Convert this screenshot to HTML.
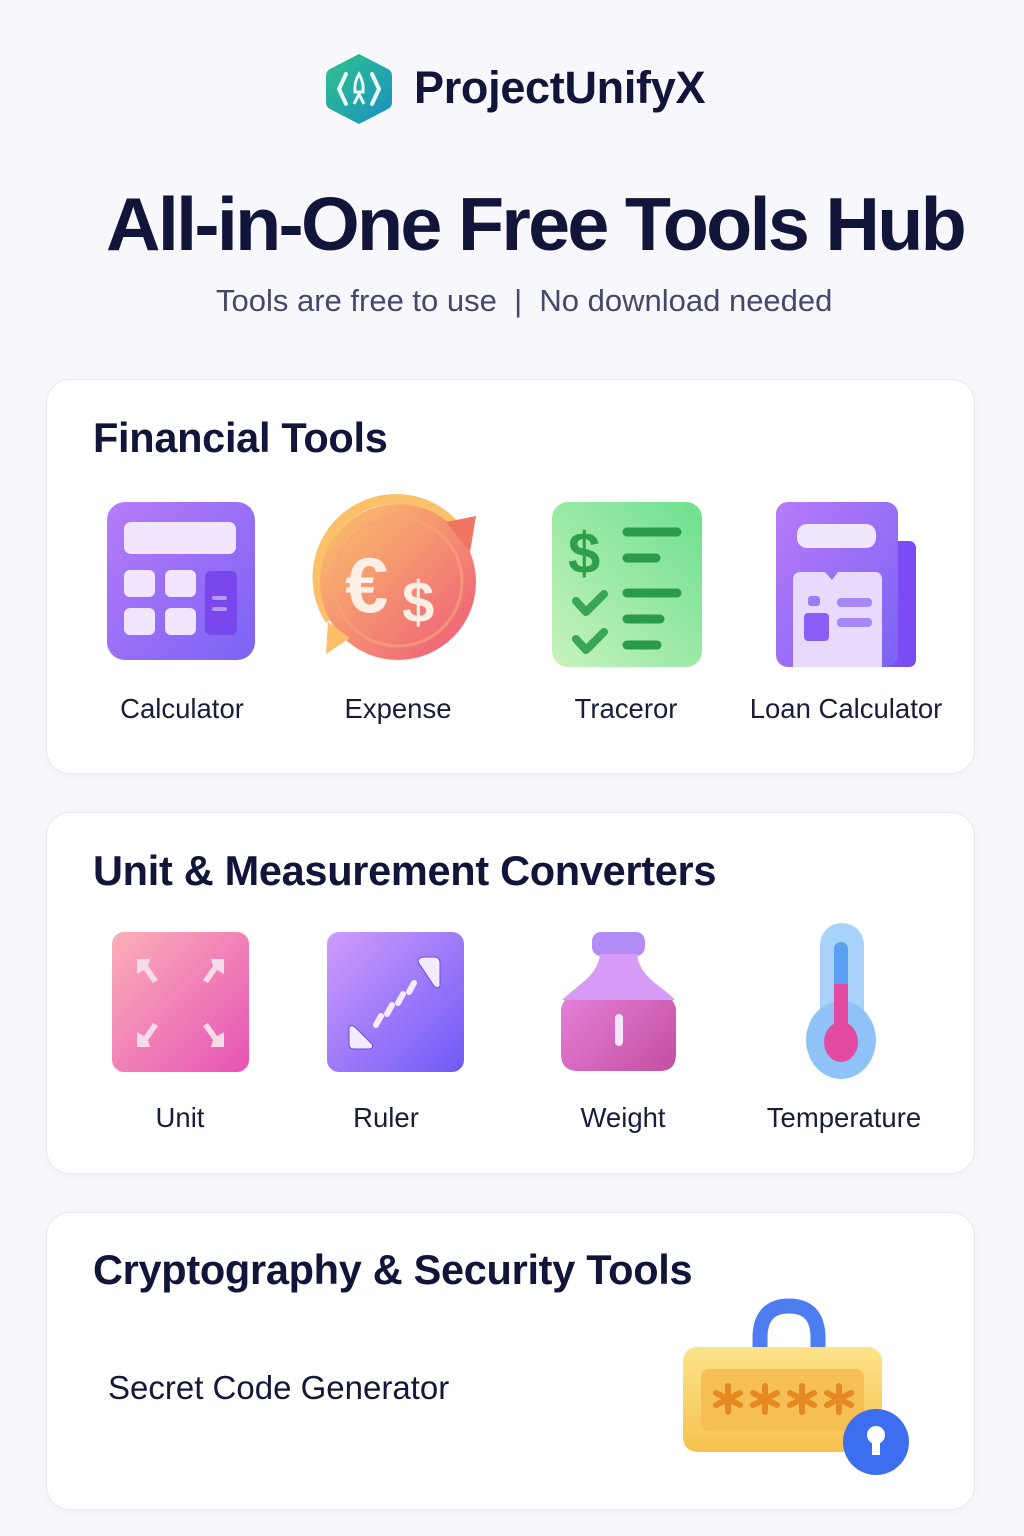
<!DOCTYPE html>
<html><head><meta charset="utf-8"><style>
*{margin:0;padding:0;box-sizing:border-box}
body{width:1024px;height:1536px;background:#f8f8fc;font-family:"Liberation Sans",sans-serif;color:#12153a;position:relative;overflow:hidden}
.a{position:absolute}
.card{position:absolute;left:46px;width:929px;background:#fff;border:1.5px solid #e7e7ef;border-radius:24px;box-shadow:0 2px 8px rgba(40,40,90,.04)}
.h{position:absolute;left:93px;font-size:41.5px;font-weight:bold;letter-spacing:-.3px;color:#12153a;white-space:nowrap}
.lbl{position:absolute;font-size:27.5px;color:#1a1d3a;text-align:center;width:240px}
</style></head><body>
<svg class="a" style="left:324px;top:52px" width="70" height="74" viewBox="0 0 70 74">
<defs><linearGradient id="lg" x1="0" y1="0" x2="1" y2="1"><stop offset="0" stop-color="#2fc48a"/><stop offset="1" stop-color="#1a8fc4"/></linearGradient></defs>
<path d="M35 2 L64 17 Q68 19 68 24 L68 50 Q68 55 64 57 L35 72 L6 57 Q2 55 2 50 L2 24 Q2 19 6 17 Z" fill="url(#lg)"/>
<path d="M22 22 L15 37 L22 52 M48 22 L55 37 L48 52" stroke="#e8fbf4" stroke-width="4" fill="none" stroke-linecap="round"/>
<path d="M35 22 Q30 30 31 40 L39 40 Q40 30 35 22Z M30 52 L35 42 L40 52" fill="none" stroke="#e8fbf4" stroke-width="3"/>
</svg>
<div class="a" style="left:414px;top:62px;font-size:45px;font-weight:bold;letter-spacing:-.3px">ProjectUnifyX</div>
<div class="a" style="left:106px;top:181px;font-size:75.5px;font-weight:bold;letter-spacing:-2.7px;white-space:nowrap">All-in-One Free Tools Hub</div>
<div class="a" style="left:216px;top:283px;font-size:31px;color:#45486a;white-space:nowrap">Tools are free to use&nbsp; | &nbsp;No download needed</div>

<div class="card" style="top:379px;height:395px"></div>
<div class="h" style="top:414px">Financial Tools</div>
<svg class="a" style="left:0;top:0" width="1024" height="1536">
<defs>
<linearGradient id="g1" x1="0" y1="0" x2="1" y2="1"><stop offset="0" stop-color="#b77bf8"/><stop offset="1" stop-color="#7b63f5"/></linearGradient>
<linearGradient id="g2" x1="0" y1="0" x2="1" y2="1"><stop offset="0" stop-color="#fbc46a"/><stop offset="1" stop-color="#ee5a7a"/></linearGradient>
<linearGradient id="g3" x1="0" y1="1" x2="1" y2="0"><stop offset="0" stop-color="#c7f2bd"/><stop offset="1" stop-color="#6ee08e"/></linearGradient>
<linearGradient id="g4" x1="0" y1="0" x2="1" y2="1"><stop offset="0" stop-color="#fcb0b8"/><stop offset="1" stop-color="#e653b6"/></linearGradient>
<linearGradient id="g5" x1="0" y1="0" x2="1" y2="1"><stop offset="0" stop-color="#cf9cfb"/><stop offset="1" stop-color="#6f5af7"/></linearGradient>
<linearGradient id="g6" x1="0" y1="0" x2="1" y2="1"><stop offset="0" stop-color="#ee8ae4"/><stop offset="1" stop-color="#c24fa0"/></linearGradient>
<linearGradient id="g7" x1="0" y1="0" x2="0" y2="1"><stop offset="0" stop-color="#fde38a"/><stop offset="1" stop-color="#f7c250"/></linearGradient>
</defs>
<rect x="107" y="502" width="148" height="158" rx="18" fill="url(#g1)"/>
<rect x="124" y="522" width="112" height="32" rx="7" fill="#f1e6fd"/>
<rect x="124" y="570" width="31" height="27" rx="6" fill="#f1e6fd"/><rect x="165" y="570" width="31" height="27" rx="6" fill="#f1e6fd"/>
<rect x="124" y="608" width="31" height="27" rx="6" fill="#f1e6fd"/><rect x="165" y="608" width="31" height="27" rx="6" fill="#f1e6fd"/>
<rect x="205" y="571" width="32" height="64" rx="6" fill="#7a47ee"/>
<rect x="212" y="596" width="15" height="4" rx="2" fill="#b79af5"/><rect x="212" y="607" width="15" height="4" rx="2" fill="#b79af5"/>
<path d="M330 620 A72 72 0 0 1 462 535" stroke="#fbc06a" stroke-width="10" fill="none"/>
<circle cx="398" cy="582" r="78" fill="url(#g2)"/>
<circle cx="398" cy="582" r="64" fill="none" stroke="#f7a27a" stroke-width="3" opacity=".7"/>
<path d="M446 522 L476 516 L470 552 Z" fill="#f17565"/><path d="M350 638 L326 654 L328 622 Z" fill="#fbbf68"/>
<text x="345" y="612" font-size="78" font-weight="bold" fill="#fdeee6" font-family="Liberation Sans">€</text>
<text x="402" y="622" font-size="58" font-weight="bold" fill="#fdeee6" font-family="Liberation Sans">$</text>
<rect x="552" y="502" width="150" height="165" rx="16" fill="url(#g3)"/>
<text x="568" y="573" font-size="58" font-weight="bold" fill="#2e9f4a" font-family="Liberation Sans">$</text>
<g stroke="#2a9b46" stroke-width="9" stroke-linecap="round">
<line x1="627" y1="532" x2="677" y2="532"/><line x1="627" y1="558" x2="656" y2="558"/>
<line x1="627" y1="593" x2="677" y2="593"/><line x1="627" y1="619" x2="660" y2="619"/><line x1="627" y1="645" x2="657" y2="645"/>
</g>
<path d="M576 601 L586 612 L604 594 M576 639 L586 650 L604 632" stroke="#3aa552" stroke-width="8" fill="none" stroke-linecap="round" stroke-linejoin="round"/>
<rect x="876" y="541" width="40" height="126" rx="7" fill="#7b4cf4"/>
<rect x="776" y="502" width="122" height="165" rx="12" fill="url(#g1)"/>
<rect x="797" y="524" width="79" height="24" rx="10" fill="#f0e6fd"/>
<path d="M793 580 Q793 572 801 572 L825 572 L832 580 L838 572 L875 572 Q882 572 882 580 L882 667 L793 667 Z" fill="#e8dafc"/>
<rect x="808" y="596" width="12" height="10" rx="3" fill="#9b7cf5"/><rect x="804" y="613" width="25" height="28" rx="4" fill="#8b5cf6"/>
<rect x="837" y="598" width="35" height="9" rx="4" fill="#a688f7"/><rect x="837" y="618" width="35" height="9" rx="4" fill="#a688f7"/>
</svg>
<div class="lbl" style="left:62px;top:693px">Calculator</div>
<div class="lbl" style="left:278px;top:693px">Expense</div>
<div class="lbl" style="left:506px;top:693px">Traceror</div>
<div class="lbl" style="left:726px;top:693px">Loan Calculator</div>

<div class="card" style="top:812px;height:362px"></div>
<div class="h" style="top:847px">Unit &amp; Measurement Converters</div>
<svg class="a" style="left:0;top:0" width="1024" height="1536">
<rect x="112" y="932" width="137" height="140" rx="12" fill="url(#g4)"/>
<g fill="#f6dcea">
<path d="M137 959 L150 959 L148 966 L158 980 L153 983 L144 970 L137 974Z"/>
<path d="M224 959 L211 959 L213 966 L203 980 L208 983 L217 970 L224 974Z"/>
<path d="M137 1047 L150 1047 L148 1040 L158 1026 L153 1023 L144 1036 L137 1032Z"/>
<path d="M224 1047 L211 1047 L213 1040 L203 1026 L208 1023 L217 1036 L224 1032Z"/>
</g>
<rect x="327" y="932" width="137" height="140" rx="12" fill="url(#g5)"/>
<path d="M418 962 Q418 957 424 957 L434 957 Q440 957 440 963 L440 985 Q439 990 434 986 Z" fill="#f2eafd" stroke="#6a4ce0" stroke-width="1"/>
<path d="M349 1027 Q352 1024 356 1028 L372 1044 Q374 1049 368 1049 L354 1049 Q349 1049 349 1044 Z" fill="#f2eafd" stroke="#6a4ce0" stroke-width="1"/>
<g stroke="#f2eafd" stroke-width="6" stroke-linecap="round">
<line x1="376" y1="1025" x2="381" y2="1016"/><line x1="387" y1="1014" x2="392" y2="1005"/><line x1="398" y1="1003" x2="403" y2="994"/><line x1="409" y1="992" x2="414" y2="983"/>
</g>
<rect x="592" y="932" width="53" height="24" rx="9" fill="#b48cf5"/>
<path d="M600 954 L637 954 Q638 970 656 984 Q676 1000 676 1010 L676 1054 Q676 1071 660 1071 L578 1071 Q561 1071 561 1054 L561 1010 Q561 1000 581 984 Q599 970 600 954Z" fill="url(#g6)"/>
<path d="M600 954 L637 954 Q638 970 656 984 Q672 996 675 1000 L562 1000 Q566 996 581 984 Q599 970 600 954Z" fill="#d79cf5"/>
<rect x="615" y="1014" width="8" height="32" rx="4" fill="#f5e6fb"/>
<rect x="820" y="923" width="44" height="110" rx="22" fill="#a9d2fb"/>
<ellipse cx="841" cy="1040" rx="35" ry="39" fill="#8fc3f7"/>
<rect x="834" y="942" width="14" height="90" rx="7" fill="#5aa1f3"/>
<rect x="834" y="984" width="14" height="50" fill="#e24ba1"/>
<ellipse cx="841" cy="1042" rx="17" ry="20" fill="#e24ba1"/>
</svg>
<div class="lbl" style="left:60px;top:1102px">Unit</div>
<div class="lbl" style="left:266px;top:1102px">Ruler</div>
<div class="lbl" style="left:503px;top:1102px">Weight</div>
<div class="lbl" style="left:724px;top:1102px">Temperature</div>

<div class="card" style="top:1212px;height:298px"></div>
<div class="h" style="top:1246px">Cryptography &amp; Security Tools</div>
<div class="a" style="left:108px;top:1369px;font-size:33px;color:#14173a">Secret Code Generator</div>
<svg class="a" style="left:0;top:0" width="1024" height="1536">
<path d="M760 1350 L760 1338 Q760 1306 789 1306 Q818 1306 818 1338 L818 1350" stroke="#4d7df0" stroke-width="15" fill="none"/>
<rect x="683" y="1347" width="199" height="105" rx="14" fill="url(#g7)"/>
<rect x="701" y="1369" width="163" height="62" rx="8" fill="#f6bf55"/>
<g stroke="#e58a22" stroke-width="6" stroke-linecap="round">
<g transform="translate(728,1399)"><line x1="0" y1="-13" x2="0" y2="13"/><line x1="-12" y1="-6" x2="12" y2="6"/><line x1="-12" y1="6" x2="12" y2="-6"/></g>
<g transform="translate(765,1399)"><line x1="0" y1="-13" x2="0" y2="13"/><line x1="-12" y1="-6" x2="12" y2="6"/><line x1="-12" y1="6" x2="12" y2="-6"/></g>
<g transform="translate(802,1399)"><line x1="0" y1="-13" x2="0" y2="13"/><line x1="-12" y1="-6" x2="12" y2="6"/><line x1="-12" y1="6" x2="12" y2="-6"/></g>
<g transform="translate(839,1399)"><line x1="0" y1="-13" x2="0" y2="13"/><line x1="-12" y1="-6" x2="12" y2="6"/><line x1="-12" y1="6" x2="12" y2="-6"/></g>
</g>
<circle cx="876" cy="1442" r="33" fill="#3e6ef0"/>
<circle cx="876" cy="1435" r="9" fill="#fff"/><rect x="872" y="1437" width="8" height="18" fill="#fff"/>
</svg>
</body></html>
